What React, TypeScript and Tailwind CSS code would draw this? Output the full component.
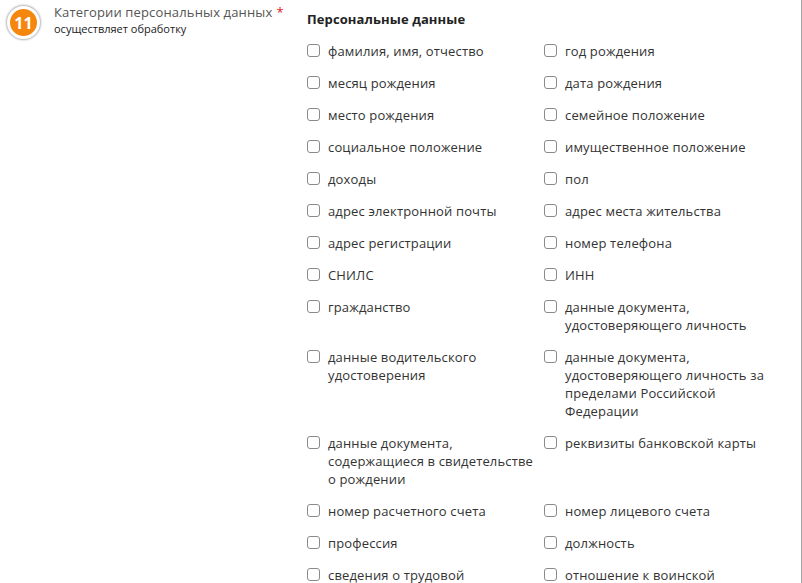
import React from "react";

const rows: [string, string][] = [
  ["фамилия, имя, отчество", "год рождения"],
  ["месяц рождения", "дата рождения"],
  ["место рождения", "семейное положение"],
  ["социальное положение", "имущественное положение"],
  ["доходы", "пол"],
  ["адрес электронной почты", "адрес места жительства"],
  ["адрес регистрации", "номер телефона"],
  ["СНИЛС", "ИНН"],
  ["гражданство", "данные документа, удостоверяющего личность"],
  [
    "данные водительского удостоверения",
    "данные документа, удостоверяющего личность за пределами Российской Федерации",
  ],
  ["данные документа, содержащиеся в свидетельстве о рождении", "реквизиты банковской карты"],
  ["номер расчетного счета", "номер лицевого счета"],
  ["профессия", "должность"],
  ["сведения о трудовой деятельности", "отношение к воинской обязанности"],
];

function Item({ label }: { label: string }) {
  return (
    <label className="flex items-start gap-[8px]">
      <span className="mt-[2px] h-[13px] w-[13px] shrink-0 rounded-[3px] border border-[#8a8a8a] bg-white" />
      <span className="w-[210px] text-[13px] leading-[18px] tracking-[0.15px] text-[#333]">{label}</span>
    </label>
  );
}

export default function App() {
  return (
    <div
      className="flex h-[583px] w-[802px] overflow-hidden border-r border-[#a6a6a6] bg-white"
      style={{ fontFamily: '"Open Sans", "Noto Sans", sans-serif' }}
    >
      <div className="flex w-[307px] shrink-0 items-start">
        <div className="ml-[7px] mt-[6px] flex h-[33px] w-[33px] items-center justify-center rounded-full border-[3px] border-white bg-[#f5870f] shadow-[0_0_2px_1px_rgba(0,0,0,0.3)]">
          <span className="text-[16px] font-bold leading-none text-white">11</span>
        </div>
        <div className="ml-[14px] pt-[3px]">
          <div className="text-[13px] leading-[18px] tracking-[0.15px] text-[#555]">
            Категории персональных данных<span className="ml-[4px] text-[#e02020]">*</span>
          </div>
          <div className="mt-[1px] text-[11px] leading-[14px] text-[#222]">осуществляет обработку</div>
        </div>
      </div>
      <div className="pt-[10px]">
        <div className="text-[13px] font-bold leading-[18px] tracking-[0.1px] text-[#222]">Персональные данные</div>
        <div className="mt-[14px] grid grid-cols-[237px_237px] gap-y-[14px]">
          {rows.map(([a, b], i) => (
            <React.Fragment key={i}>
              <Item label={a} />
              <Item label={b} />
            </React.Fragment>
          ))}
        </div>
      </div>
    </div>
  );
}
